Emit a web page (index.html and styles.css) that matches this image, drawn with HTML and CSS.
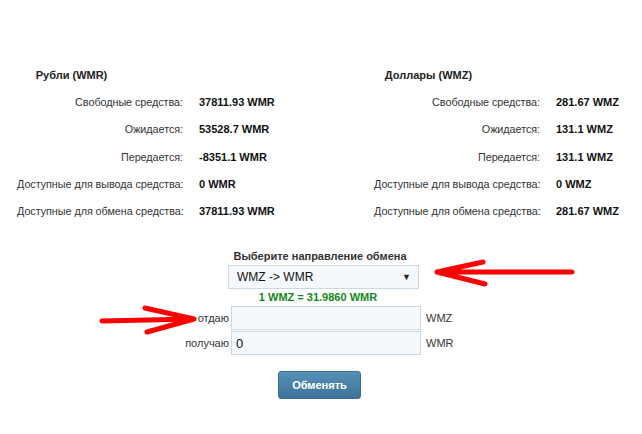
FILE: index.html
```html
<!DOCTYPE html>
<html>

<head>
    <meta charset="utf-8" />
    <title>Обмен</title>
    <link rel="stylesheet" href="styles.css">
</head>

<body>
    <section id="accounts">
        <div class="account">
            <div class="account-title">Рубли (WMR)</div>
            <div class="account-rows">
                <span class="lbl">Свободные средства:</span><span class="val">37811.93 WMR</span>
                <span class="lbl">Ожидается:</span><span class="val">53528.7 WMR</span>
                <span class="lbl">Передается:</span><span class="val">-8351.1 WMR</span>
                <span class="lbl">Доступные для вывода средства:</span><span class="val">0 WMR</span>
                <span class="lbl">Доступные для обмена средства:</span><span class="val">37811.93 WMR</span>
            </div>
        </div>
        <div class="account">
            <div class="account-title">Доллары (WMZ)</div>
            <div class="account-rows">
                <span class="lbl">Свободные средства:</span><span class="val">281.67 WMZ</span>
                <span class="lbl">Ожидается:</span><span class="val">131.1 WMZ</span>
                <span class="lbl">Передается:</span><span class="val">131.1 WMZ</span>
                <span class="lbl">Доступные для вывода средства:</span><span class="val">0 WMZ</span>
                <span class="lbl">Доступные для обмена средства:</span><span class="val">281.67 WMZ</span>
            </div>
        </div>
    </section>

    <section id="exchange">
        <div class="direction-title">Выберите направление обмена</div>
        <div class="select">WMZ -&gt; WMR <span class="caret">&#9660;</span></div>
        <div class="rate">1 WMZ = 31.9860 WMR</div>
        <div class="amounts">
            <label class="amount-lbl">отдаю</label>
            <input type="text" class="amount" value="" />
            <span class="unit">WMZ</span>
            <label class="amount-lbl">получаю</label>
            <input type="text" class="amount" value="0" />
            <span class="unit">WMR</span>
        </div>
        <div class="actions">
            <button class="btn">Обменять</button>
        </div>
    </section>

    <!-- red pointer arrows drawn over the form -->
    <svg class="pointers" width="642" height="434" viewBox="0 0 642 434">
        <g fill="none" stroke="#ff0000" stroke-width="5" stroke-linecap="round" stroke-linejoin="round">
            <path d="M572 272 L437 272 M483 262 L437 272 L485 284" />
            <path d="M102 321 L194 319 M145 308 L194 319 L147 332" />
        </g>
    </svg>
</body>

</html>
```

FILE: styles.css
```css
* {
    padding: 0;
    margin: 0;
    box-sizing: border-box;
}

body {
    position: relative;
    width: 642px;
    height: 434px;
    overflow: hidden;
    background: #fff;
    font-family: "Liberation Sans", Arial, sans-serif;
    font-size: 11px;
    line-height: 13px;
    color: #333;
}

#accounts {
    display: flex;
    padding: 62px 0 0 17px;
}

.account {
    flex: 0 0 357px;
}

.account:last-child {
    flex: 1 0 auto;
}

.account-title {
    width: 109px;
    padding: 7px 0;
    text-align: center;
    font-weight: bold;
    color: #222;
}

.account-rows {
    display: grid;
    grid-template-columns: 166px auto;
    column-gap: 16px;
    grid-auto-rows: 27.3px;
    align-items: center;
    justify-content: start;
}

.lbl {
    text-align: right;
    white-space: nowrap;
    font-size: 10.8px;
    letter-spacing: -0.05px;
}

.val {
    font-weight: bold;
    color: #111;
    white-space: nowrap;
}

#exchange {
    padding-top: 25px;
}

.direction-title {
    text-align: center;
    font-weight: bold;
    color: #333;
    padding-right: 2px;
}

.select {
    display: flex;
    justify-content: space-between;
    align-items: center;
    width: 191px;
    height: 24px;
    margin: 2px 0 0 228px;
    padding: 0 7px 0 8px;
    border: 1px solid #c9d8e3;
    background: #f6f9fc;
    font-size: 12px;
    color: #111;
}

.caret {
    font-size: 9px;
    color: #222;
}

.rate {
    margin-top: 2px;
    text-align: center;
    font-weight: bold;
    color: #13891a;
    padding-right: 6px;
}

.amounts {
    display: grid;
    grid-template-columns: 229px 190px auto;
    grid-auto-rows: 24px;
    row-gap: 1px;
    column-gap: 2px;
    align-items: center;
    margin-top: 2px;
}

.amount-lbl {
    text-align: right;
}

.amount {
    width: 190px;
    height: 24px;
    padding: 0 4px;
    border: 1px solid #c9d8e3;
    background: #f6f9fc;
    font-family: "Liberation Sans", Arial, sans-serif;
    font-size: 13px;
    color: #111;
    outline: none;
}

.unit {
    padding-left: 3px;
}

.actions {
    padding: 16px 0 0 278px;
}

.btn {
    width: 83px;
    height: 28px;
    border: 1px solid #3b6b90;
    border-radius: 3px;
    background: linear-gradient(#5590b8, #3f7399);
    color: #fff;
    font-family: "Liberation Sans", Arial, sans-serif;
    font-size: 11px;
    font-weight: bold;
}

.pointers {
    position: absolute;
    left: 0;
    top: 0;
    pointer-events: none;
}
```
